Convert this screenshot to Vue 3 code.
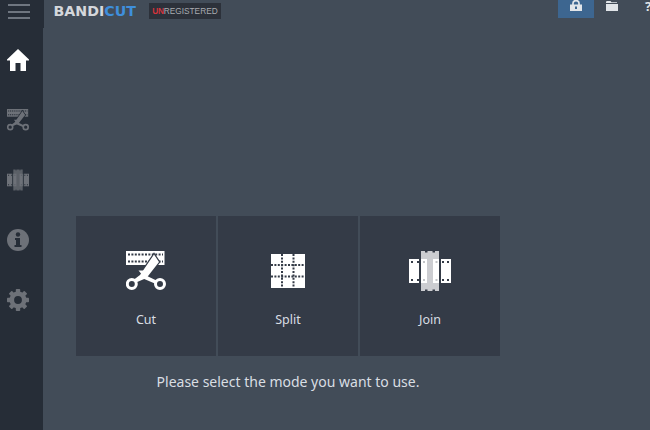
<script setup>
const teeth = [0, 45, 90, 135, 180, 225, 270, 315]
const modes = [
  { label: 'Cut', icon: '#i-cut', cls: 'ic-cut' },
  { label: 'Split', icon: '#i-split', cls: 'ic-split' },
  { label: 'Join', icon: '#i-join', cls: 'ic-join' }
]
const nav = [
  { icon: '#i-home', cls: 'on' },
  { icon: '#i-cut', cls: '' },
  { icon: '#i-join', cls: '' },
  { icon: '#i-info', cls: '' },
  { icon: '#i-gear', cls: '' }
]
</script>

<template>
  <div class="app">
    <svg class="defs" aria-hidden="true">
      <symbol id="i-home" viewBox="0 0 22 22">
        <path fill="currentColor" fill-rule="evenodd" d="M11 0 22 10.5 22 11.5 19 11.5 19 22 13.5 22 13.5 14 8.5 14 8.5 22 3 22 3 11.5 0 11.5 0 10.5Z" />
      </symbol>
      <symbol id="i-cut" viewBox="0 0 40 40">
        <rect x="0" y="0" width="38.5" height="14" fill="currentColor" />
        <path d="M2 3.5H37M2 10.5H37" stroke="var(--cutout)" stroke-width="2" stroke-dasharray="2 1.4" fill="none" />
        <path d="M28 3.5 33 11 20.5 27 10 31.5 8 28.5 14 24Z" fill="var(--cutout)" stroke="var(--cutout)" stroke-width="2.4" />
        <path d="M28 3.5 33 11 20.5 27 10 31.5 8 28.5 14 24Z" fill="currentColor" />
        <path d="M12.5 19.5 19.5 19.5 17 25Z" fill="currentColor" />
        <path d="M20 24.5 31.5 30 30 33 17 27.5Z" fill="currentColor" />
        <circle cx="5.8" cy="33" r="4.5" fill="var(--cutout)" stroke="currentColor" stroke-width="3" />
        <circle cx="34" cy="33" r="4.5" fill="var(--cutout)" stroke="currentColor" stroke-width="3" />
      </symbol>
      <symbol id="i-split" viewBox="0 0 34 34">
        <rect width="34" height="34" fill="currentColor" />
        <path d="M11 0V34M22.5 0V34M0 11H34M0 22.5H34" stroke="var(--cutout)" stroke-width="2" stroke-dasharray="2 1.4" fill="none" />
      </symbol>
      <symbol id="i-join" viewBox="0 0 42 40">
        <rect x="0" y="8" width="10" height="24" fill="currentColor" />
        <rect x="32" y="8" width="10" height="24" fill="currentColor" />
        <rect x="12" y="0" width="18" height="40" fill="currentColor" opacity=".75" />
        <rect x="12" y="8" width="6" height="24" fill="currentColor" />
        <rect x="24" y="8" width="6" height="24" fill="currentColor" />
        <path d="M2 11H4M8 11H10M2 29H4M8 29H10M33 11H35M38 11H40M33 29H35M38 29H40" stroke="var(--cutout)" stroke-width="2" fill="none" />
        <path d="M14 10H16V12H14ZM14 28H16V30H14ZM26.5 10H28.5V12H26.5ZM26.5 28H28.5V30H26.5Z" fill="var(--cutout)" opacity=".3" />
        <path d="M16 0H18.5V1.5H16ZM23.5 0H26V1.5H23.5ZM16 38.5H18.5V40H16ZM23.5 38.5H26V40H23.5Z" fill="var(--cutout)" />
      </symbol>
      <symbol id="i-info" viewBox="0 0 22 22">
        <circle cx="11" cy="11" r="11" fill="currentColor" />
        <circle cx="11" cy="5.5" r="2.2" fill="var(--cutout)" />
        <path d="M8 9H13V16H14.5V18H7.5V16H9V11H8Z" fill="var(--cutout)" />
      </symbol>
      <symbol id="i-gear" viewBox="0 0 22 22">
        <circle cx="11" cy="11" r="6.2" fill="none" stroke="currentColor" stroke-width="4.6" />
        <rect v-for="t in teeth" :key="t" x="8.8" y="0" width="4.4" height="4" rx="0.8" fill="currentColor" :transform="`rotate(${t} 11 11)`" />
      </symbol>
    </svg>

    <aside class="sidebar">
      <div class="menu"><span></span><span></span><span></span></div>
      <nav class="nav">
        <div v-for="n in nav" :key="n.icon" class="nav-item" :class="n.cls">
          <svg class="nav-icon"><use :href="n.icon" /></svg>
        </div>
      </nav>
    </aside>

    <main class="main">
      <header class="top">
        <div class="logo">BANDI<b>CUT</b></div>
        <div class="badge"><i>UN</i>REGISTERED</div>
        <div class="tools">
          <div class="tool active">
            <svg class="lock" viewBox="0 0 12 11">
              <path d="M3 5V3.2C3 1.5 4.3.6 6 .6S9 1.5 9 3.2V5" fill="none" stroke="currentColor" stroke-width="1.7" />
              <path fill-rule="evenodd" d="M0 4.5H12V11H0ZM5 6.5V9H7V6.5Z" fill="currentColor" />
            </svg>
          </div>
          <div class="tool">
            <svg class="folder" viewBox="0 0 12 10">
              <path d="M0 2V.8L.8 0H4.5L5.5 1.2H11V2Z M0 3H12V10H0Z" fill="currentColor" />
            </svg>
          </div>
          <div class="tool help">?</div>
        </div>
      </header>

      <section class="content">
        <div class="cards">
          <div v-for="m in modes" :key="m.label" class="card">
            <div class="card-icon">
              <svg :class="m.cls"><use :href="m.icon" /></svg>
            </div>
            <div class="card-label">{{ m.label }}</div>
          </div>
        </div>
        <p class="message">Please select the mode you want to use.</p>
      </section>
    </main>
  </div>
</template>

<style>
html, body { margin: 0; background: #424c58; }
</style>

<style scoped>
.app {
  display: flex;
  width: 650px;
  height: 430px;
  overflow: hidden;
  background: #424c58;
  font-family: "Noto Sans", sans-serif;
  color: #d9dee3;
  --cutout: #343b47;
}
.defs { position: absolute; width: 0; height: 0; }

.sidebar {
  width: 43px;
  flex: none;
  background: #262d37;
  display: flex;
  flex-direction: column;
  --cutout: #262d37;
}
.menu {
  width: 44px;
  height: 28px;
  flex: none;
  box-sizing: border-box;
  background: #262d37;
  padding: 4px 0 0 8px;
  display: flex;
  flex-direction: column;
  gap: 4.5px;
}
.menu span { display: block; width: 22px; height: 2px; background: #6f7680; }
.nav { display: flex; flex-direction: column; padding-top: 2px; }
.nav-item {
  height: 60px;
  display: flex;
  align-items: center;
  padding-left: 7px;
  color: #6d7178;
}
.nav-item.on { color: #ffffff; }
.nav-icon { width: 22px; height: 22px; display: block; }

.main { flex: 1; min-width: 0; display: flex; flex-direction: column; }
.top {
  height: 28px;
  flex: none;
  display: flex;
  align-items: flex-start;
  padding-left: 10.5px;
}
.logo {
  font-family: "DejaVu Sans", sans-serif;
  font-weight: 700;
  font-size: 14.2px;
  line-height: 22px;
  color: #d5d8dc;
  width: 95.5px;
  flex: none;
}
.logo b { color: #3f8fdc; }
.badge {
  margin-top: 3px;
  height: 16px;
  width: 72px;
  flex: none;
  text-align: center;
  background: #2c313a;
  font-family: "Liberation Sans", sans-serif;
  font-size: 8.3px;
  line-height: 16px;
  color: #a9acb1;
}
.badge i { font-style: normal; font-weight: 700; letter-spacing: -0.3px; color: #d4343c; }
.tools { margin-left: auto; margin-right: -16px; display: flex; flex: none; color: #e1e5e9; }
.tool {
  width: 36px;
  height: 18px;
  display: flex;
  justify-content: center;
  padding-top: 0;
}
.tool.active { background: #3d6690; }
.lock { width: 12px; height: 11px; }
.folder { width: 12px; height: 10px; margin-top: 1px; }
.help { font-size: 13px; line-height: 12px; font-weight: 700; }

.content { padding: 188px 0 0 33px; width: 424px; }
.cards { display: flex; gap: 2px; }
.card {
  width: 140px;
  height: 140px;
  background: #343b47;
  display: flex;
  flex-direction: column;
  align-items: center;
}
.card-icon {
  height: 94px;
  display: flex;
  align-items: center;
  justify-content: center;
  padding-top: 16px;
  box-sizing: border-box;
  color: #fff;
}
.ic-cut { width: 40px; height: 40px; display: block; }
.ic-split { width: 34px; height: 34px; display: block; }
.ic-join { width: 42px; height: 40px; display: block; }
.card-label { margin-top: 1px; font-size: 12.5px; line-height: 18px; }
.message {
  margin: 16px 0 0;
  text-align: center;
  font-size: 14px;
  line-height: 19px;
}
</style>
